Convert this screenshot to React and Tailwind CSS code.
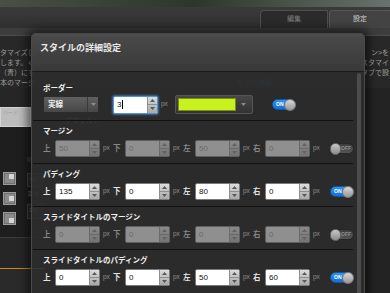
import React from "react";

const SIDES = ["上", "下", "左", "右"];

const Tri = ({ up, color = "#585858" }) => (
  <svg width="5" height="3" viewBox="0 0 5 3">
    <path d={up ? "M2.5 0L5 3H0z" : "M0 0h5L2.5 3z"} fill={color} />
  </svg>
);

const Spinner = ({ disabled }) => (
  <div
    className={
      disabled
        ? "flex h-full w-[10px] flex-col border-l border-[#6b6b6b] bg-gradient-to-b from-[#8a8a8a] to-[#747474]"
        : "flex h-full w-[10px] flex-col border-l border-[#8f8f8f] bg-gradient-to-b from-[#dcdcdc] to-[#a9a9a9]"
    }
  >
    <div className="flex flex-1 items-center justify-center">
      <Tri up color={disabled ? "#626262" : "#585858"} />
    </div>
    <div className={disabled ? "h-px bg-[#6b6b6b]" : "h-px bg-[#8f8f8f]"} />
    <div className="flex flex-1 items-center justify-center">
      <Tri color={disabled ? "#626262" : "#585858"} />
    </div>
  </div>
);

const NumInput = ({ value, disabled, focused }) => (
  <div
    className={
      focused
        ? "flex h-[18px] w-[45px] overflow-hidden rounded-[2px] border border-[#4f93d6] bg-white shadow-[0_0_2px_1px_rgba(80,150,220,0.6)]"
        : disabled
        ? "flex h-[17px] w-[45px] overflow-hidden rounded-[2px] border border-[#5f5f5f] bg-[#8f8f8f]"
        : "flex h-[17px] w-[45px] overflow-hidden rounded-[2px] border border-[#7a7a7a] bg-white"
    }
  >
    <div
      className={
        disabled
          ? "flex flex-1 items-center pl-[3px] text-[8px] leading-none text-[#6a6a6a]"
          : "flex flex-1 items-center pl-[3px] text-[8px] leading-none text-[#111]"
      }
    >
      {value}
      {focused && <span className="ml-px h-[9px] w-px bg-black" />}
    </div>
    <Spinner disabled={disabled} />
  </div>
);

const Toggle = ({ on }) =>
  on ? (
    <div className="flex h-[11px] w-[24px] items-center justify-between rounded-full border border-[#0f5aa6] bg-gradient-to-b from-[#2f95ee] to-[#1470d2]">
      <span className="pl-[3px] text-[5px] font-bold leading-none text-white">ON</span>
      <span className="-mr-px h-[12px] w-[12px] rounded-full border border-[#7b7b7b] bg-gradient-to-b from-[#d8d8d8] to-[#979797]" />
    </div>
  ) : (
    <div className="flex h-[11px] w-[24px] items-center justify-between rounded-full border border-[#262626] bg-gradient-to-b from-[#3c3c3c] to-[#555]">
      <span className="-ml-px h-[12px] w-[12px] rounded-full border border-[#6e6e6e] bg-gradient-to-b from-[#c8c8c8] to-[#8c8c8c]" />
      <span className="pr-[2px] text-[5px] font-bold leading-none text-[#8f8f8f]">OFF</span>
    </div>
  );

const Section = ({ title, first, children }) => (
  <div className={first ? "pb-[7px] pl-[11px] pt-[12px]" : "pb-[6px] pl-[11px] pt-[6px]"}>
    <div className="h-[10px] text-[7.5px] font-bold leading-[10px] text-[#ededed]">{title}</div>
    <div className={first ? "mt-[2px]" : "mt-[3px]"}>{children}</div>
  </div>
);

const Divider = () => <div className="ml-px mr-[2px] h-px bg-[#111]" />;

const SideRow = ({ values, on }) => (
  <div className="flex h-[17px] items-center">
    {values.map((v, i) => (
      <div key={i} className="flex w-[70px] items-center">
        <span
          className={
            on
              ? "w-[12px] text-[7.5px] font-bold leading-none text-[#e4e4e4]"
              : "w-[12px] text-[7.5px] font-bold leading-none text-[#868686]"
          }
        >
          {SIDES[i]}
        </span>
        <NumInput value={v} disabled={!on} />
        <span className="ml-[3px] text-[6.5px] leading-none text-[#8d8d8d]">px</span>
      </div>
    ))}
    <div className="ml-[7px]">
      <Toggle on={on} />
    </div>
  </div>
);

const LayoutIcon = ({ y }) => (
  <svg width="13" height="13" viewBox="0 0 13 13">
    <rect x="0.5" y="0.5" width="12" height="12" fill="#6f6f6f" stroke="#9a9a9a" />
    <rect x="2" y="2" width="9" height="9" fill="#8a8a8a" />
    <rect x="6" y={y} width="5" height="5" fill="#d6d6d6" />
  </svg>
);

// text of the page behind the dialog: only the parts left and right of it
const BgLine = ({ left, right, children }) => (
  <div className="flex h-[10px] whitespace-nowrap">
    <span className="w-[31px] shrink-0">{left}</span>
    <span className="flex-1">{children}</span>
    {right && <span className="shrink-0 pr-[1px]">{right}</span>}
  </div>
);

export default function App() {
  return (
    <div className="relative h-[293px] w-[390px] overflow-hidden bg-[#232323] font-['Liberation_Sans','Noto_Sans_CJK_JP',sans-serif]">
      {/* page behind the dialog */}
      <div className="h-[7px] bg-gradient-to-r from-[#4a4f48] via-[#2d372b] to-[#6b716e]" />
      <div className="flex h-[21px] items-end justify-end gap-px bg-gradient-to-b from-[#3a3a3a] to-[#303030]">
        <div className="flex h-[18px] w-[68px] items-center justify-center rounded-tl-[4px] border border-b-0 border-[#4f4f4f] bg-[#2b2b2b] text-[7px] text-[#7c7c7c]">
          編集
        </div>
        <div className="flex h-[18px] w-[61px] items-center justify-center rounded-tl-[4px] border border-b-0 border-r-0 border-[#565656] bg-[#434343] text-[7px] text-[#cfcfcf]">
          設定
        </div>
      </div>
      <div className="h-[8px] border-b border-[#4b4b4b] bg-[#3d3d3d]" />
      <div className="h-[52px] bg-[#282828] pt-[12px] text-[7px] leading-[10px] text-[#9c9c9c]">
        <BgLine left="タマイズし" right="ン>を" />
        <BgLine left="します。く" right="スタマイ" />
        <BgLine left="（青）にす" right="タブで設" />
        <BgLine left="本のマージ">
          <span className="ml-[206px] text-[#3d6fb0]">もっと詳細</span>
        </BgLine>
      </div>
      <div className="flex">
        <div className="flex w-[45px] flex-col">
          <div className="h-[19px] bg-[#262626]" />
          <div className="h-[20px] w-[31px] border border-[#d4d4d4] bg-[#bdbdbd] pl-[2px] text-[5px] leading-[8px] text-[#999]">
            ハード
          </div>
          <div className="flex h-[110px] bg-[#1e1e1e]">
            <div className="flex w-[27px] flex-col gap-[7px] pl-[3px] pt-[45px]">
              <LayoutIcon y={2} />
              <LayoutIcon y={4} />
              <LayoutIcon y={6} />
            </div>
            <div className="flex flex-col pt-[30px] text-[5.5px] leading-none text-[#777]">
              <div className="h-[5px] w-[4px] bg-[#333]" />
              <div className="mt-[11px] flex h-[14px] w-[16px] items-center border border-[#444] bg-[#2a2a2a] pl-[2px]">60</div>
              <div className="mt-[5px] pl-[1px]">両方</div>
              <div className="mt-[6px] flex h-[15px] w-[16px] items-center border border-[#444] bg-[#2a2a2a] pl-[1px]">100</div>
            </div>
          </div>
          <div className="h-px bg-[#3b3b3b]" />
          <div className="h-[30px] bg-[#262626]" />
          <div className="h-px bg-[#c98a1e]" />
          <div className="h-[40px] bg-[#2a2a2a]" />
        </div>
        <div className="pl-[20px] pt-[29px] text-[7px] leading-none text-[#bdbdbd]">デフォルト</div>
      </div>

      {/* dialog */}
      <div className="absolute left-[31px] top-[33px] flex h-[270px] w-[334px] flex-col overflow-hidden rounded-t-[5px] border border-[#4a4a4a] shadow-[0_0_10px_4px_rgba(0,0,0,0.55)]">
        <div className="h-[38px] border-b border-[#1b1b1b] bg-gradient-to-b from-[#4e4e4e]/90 to-[#3a3a3a]/90 pl-[8px] pt-[9px]">
          <h1 className="text-[9px] font-bold leading-[10px] text-[#e9e9e9]">スタイルの詳細設定</h1>
        </div>
        <div className="flex flex-1 bg-[#2c2c2c]/90">
          <div className="flex-1">
            <Section title="ボーダー" first>
              <div className="flex h-[17px] items-center">
                <div className="flex h-[17px] w-[56px] items-center rounded-[2px] border border-[#2c2c2c] bg-gradient-to-b from-[#606060] to-[#474747]">
                  <span className="flex-1 pl-[4px] text-[7.5px] font-bold leading-none text-[#efefef]">実線</span>
                  <div className="flex h-full w-[11px] items-center justify-center border-l border-[#3a3a3a]">
                    <Tri color="#8c8c8c" />
                  </div>
                </div>
                <div className="ml-[14px]">
                  <NumInput value="3" focused />
                </div>
                <span className="ml-[3px] w-[14px] text-[6.5px] leading-none text-[#8d8d8d]">px</span>
                <div className="flex h-[19px] w-[78px] items-center rounded-[2px] border border-[#555] bg-gradient-to-b from-[#474747] to-[#333] p-[2px]">
                  <div className="h-full flex-1 border border-[#7a8f16] bg-[#c8f21e]" />
                  <div className="flex h-full w-[14px] items-center justify-center">
                    <Tri color="#8a8a8a" />
                  </div>
                </div>
                <div className="ml-[19px]">
                  <Toggle on />
                </div>
              </div>
            </Section>
            <Divider />
            <Section title="マージン">
              <SideRow values={["50", "0", "50", "0"]} on={false} />
            </Section>
            <Divider />
            <Section title="パディング">
              <SideRow values={["135", "0", "80", "0"]} on />
            </Section>
            <Divider />
            <Section title="スライドタイトルのマージン">
              <SideRow values={["0", "0", "0", "0"]} on={false} />
            </Section>
            <Divider />
            <Section title="スライドタイトルのパディング">
              <SideRow values={["0", "0", "50", "60"]} on />
            </Section>
          </div>
          <div className="w-[9px] pl-[2px] pt-px">
            <div className="h-full w-[4px] rounded-t-full bg-[#4c4c4c]" />
          </div>
        </div>
      </div>
    </div>
  );
}
